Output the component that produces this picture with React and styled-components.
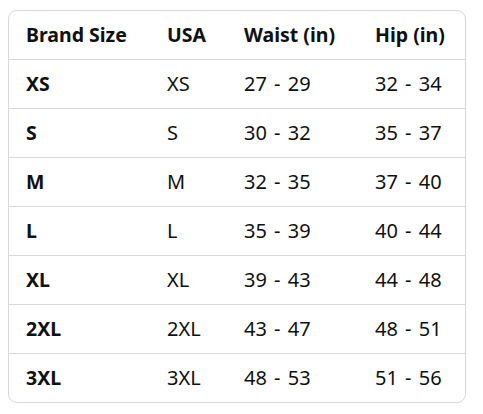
import React from 'react';
import styled, { createGlobalStyle } from 'styled-components';

const GlobalStyle = createGlobalStyle`
    body {
        margin: 0;
        background: #fff;
        font-family: "Noto Sans", "Open Sans", Arial, sans-serif;
        color: #0f1111;
    }
`;

const Page = styled.div`
    padding: 10px 17px 12px 8px;
`;

const Table = styled.div`
    width: 458px;
    box-sizing: border-box;
    border: 1px solid #d5d9d9;
    border-radius: 9px;
    overflow: hidden;
`;

const Row = styled.div`
    display: grid;
    grid-template-columns: 141px 77px 131px 1fr;
    align-items: center;
    height: 48px;
    padding-left: 17px;
    border-bottom: ${(p) => (p.$last ? 'none' : '1px solid #d5d9d9')};
`;

const Cell = styled.div`
    font-size: ${(p) => (p.$bold ? '19.5px' : '20px')};
    font-weight: ${(p) => (p.$bold ? 700 : 400)};
    word-spacing: ${(p) => (p.$bold ? '0' : '2px')};
    line-height: 1;
    white-space: nowrap;
`;

const headers = ['Brand Size', 'USA', 'Waist (in)', 'Hip (in)'];

const rows = [
    ['XS', 'XS', '27 - 29', '32 - 34'],
    ['S', 'S', '30 - 32', '35 - 37'],
    ['M', 'M', '32 - 35', '37 - 40'],
    ['L', 'L', '35 - 39', '40 - 44'],
    ['XL', 'XL', '39 - 43', '44 - 48'],
    ['2XL', '2XL', '43 - 47', '48 - 51'],
    ['3XL', '3XL', '48 - 53', '51 - 56'],
];

export default function App() {
    return (
        <Page>
            <GlobalStyle />
            <Table>
                <Row>
                    {headers.map((h) => (
                        <Cell key={h} $bold>{h}</Cell>
                    ))}
                </Row>
                {rows.map((r, i) => (
                    <Row key={r[0]} $last={i === rows.length - 1}>
                        {r.map((v, j) => (
                            <Cell key={j} $bold={j === 0}>{v}</Cell>
                        ))}
                    </Row>
                ))}
            </Table>
        </Page>
    );
}
